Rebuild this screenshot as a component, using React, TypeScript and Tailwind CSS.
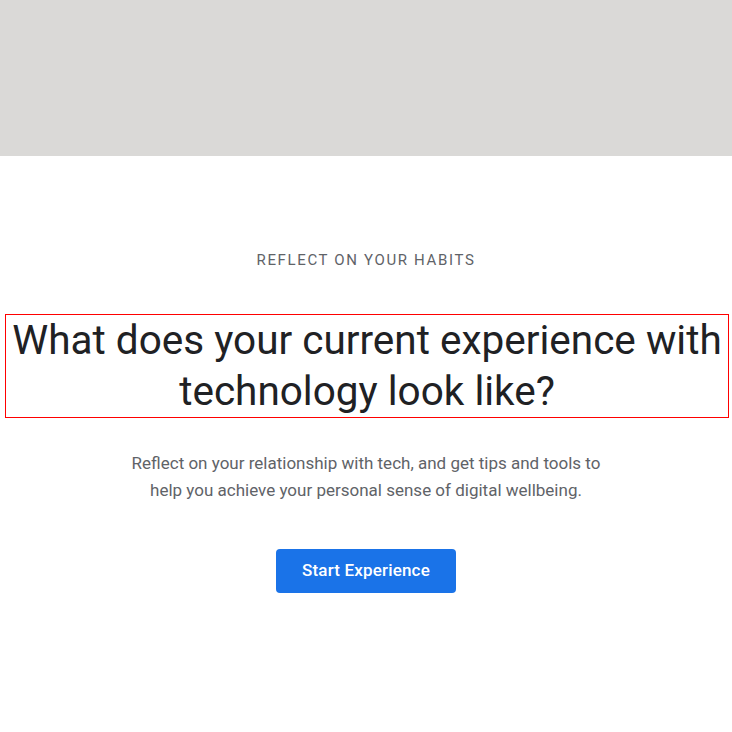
import React from "react";

export default function App() {
  return (
    <div className="min-h-[732px] w-full bg-white" style={{ fontFamily: "Roboto, 'Noto Sans', sans-serif" }}>
      <div className="h-[156px] w-full bg-[#dad9d7]" />
      <div className="flex flex-col items-center pt-[94px]">
        <div className="text-[15px] leading-[20px] tracking-[0.11em] text-[#5f6368]">REFLECT ON YOUR HABITS</div>
        <h1 className="ml-[5px] mr-[3px] mt-[44px] self-stretch border border-[#ff0000] text-center text-[40.5px] font-normal leading-[51px] text-[#202124]">
          What does your current experience with technology look like?
        </h1>
        <p className="mt-[32px] max-w-[474px] text-center text-[17px] leading-[27px] text-[#5f6368]">
          Reflect on your relationship with tech, and get tips and tools to help you achieve your personal sense of digital wellbeing.
        </p>
        <button className="mt-[45px] h-[44px] w-[180px] rounded-[4px] bg-[#1a73e8] text-[17px] font-medium tracking-[0.01em] text-white">
          Start Experience
        </button>
      </div>
    </div>
  );
}
